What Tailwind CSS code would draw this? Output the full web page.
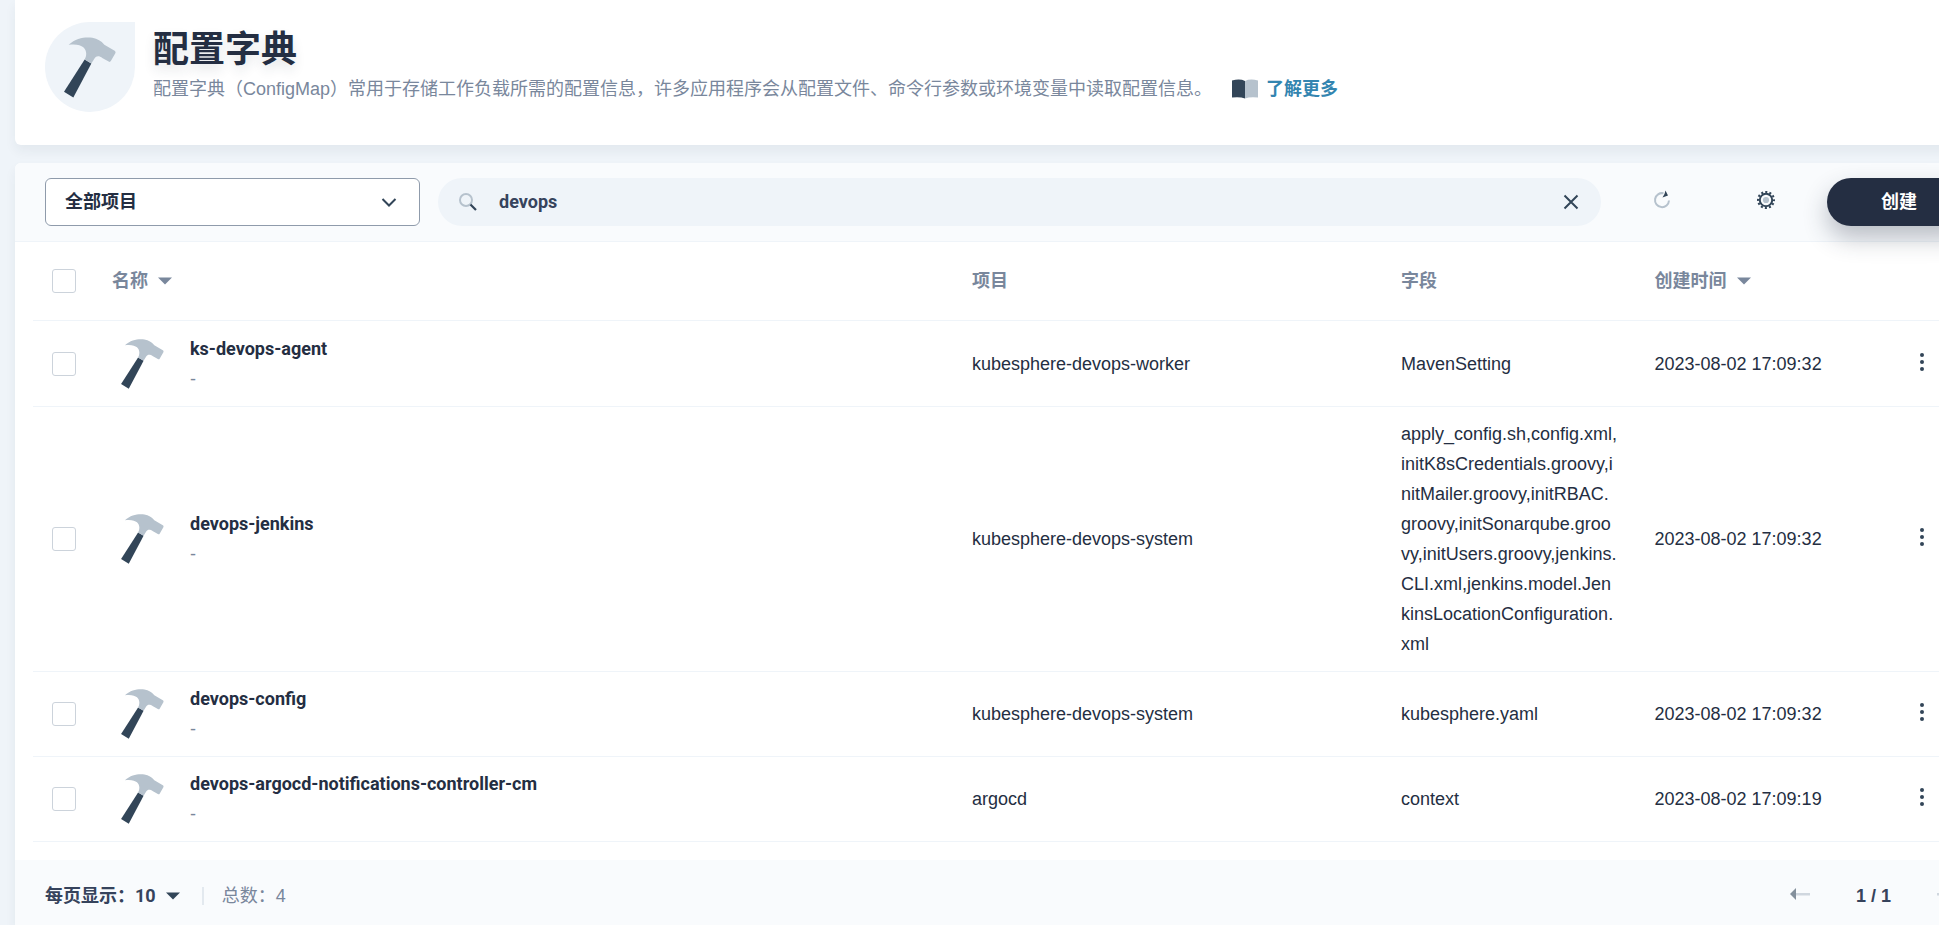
<!DOCTYPE html>
<html lang="zh-CN">
<head>
<meta charset="utf-8">
<title>配置字典</title>
<script src="https://cdn.jsdelivr.net/npm/@tailwindcss/browser@4"></script>
</head>
<body class="h-screen overflow-hidden bg-[#eff4f9] font-['Liberation_Sans','Noto_Sans_CJK_SC',sans-serif] text-lg leading-[30px] text-[#242e42]">
<svg class="hidden" aria-hidden="true">
  <symbol id="hammer" viewBox="195 110 156 182">
    <path fill="#324558" d="M257 177L277 189L223 291L195 274Z"/>
    <path fill="#b6c2cd" d="M209 133C232 111 262 109 280 112C296 115 306 121 316 133L347 151Q351 154 349 158L336 181Q333 186 329 183L311 173C299 164 291 167 287 173L277 189L257 177C268 157 262 126 209 133Z"/>
  </symbol>
  <symbol id="caret" viewBox="0 0 14 8"><path fill="currentColor" d="M0 0.5H14L7 7.5Z"/></symbol>
  <symbol id="dots" viewBox="0 0 24 24"><g fill="#324558"><circle cx="12" cy="5" r="2"/><circle cx="12" cy="12" r="2"/><circle cx="12" cy="19" r="2"/></g></symbol>
</svg>
<main class="-mr-[62px] ml-[15px] flex flex-col gap-[18px]">
  <header class="flex items-start gap-[18px] rounded-b-md bg-white px-[30px] pt-[22px] pb-[33px] shadow-[0_6px_12px_0_rgba(36,46,66,0.06)]">
    <div class="flex size-[90px] items-center justify-center rounded-full rounded-tr-none bg-[#eff4f9]">
      <svg class="h-[61px] w-[52px]"><use href="#hammer"/></svg>
    </div>
    <div class="pt-1">
      <h1 class="text-4xl leading-[48px] font-bold [text-shadow:0_6px_12px_rgba(36,46,66,0.12)]">配置字典</h1>
      <p class="flex items-center text-[#79879c]">配置字典（ConfigMap）常用于存储工作负载所需的配置信息，许多应用程序会从配置文件、命令行参数或环境变量中读取配置信息。
        <a href="#" class="ml-5 flex items-center gap-2 font-bold text-[#3385b0]">
          <svg class="h-5 w-[26px]" viewBox="0 0 26 20"><path fill="#324558" d="M0 1.5Q8 -.5 13 2V19.5Q8 17.500 0 18.500Z"/><path fill="#b6c2cd" d="M26 1.500Q18 -.500 13 2V19.500Q18 17.500 26 18.500Z"/></svg>
          了解更多
        </a>
      </p>
    </div>
  </header>

  <section class="overflow-hidden rounded-md bg-white shadow-[0_6px_12px_0_rgba(36,46,66,0.06)]">
    <div class="flex items-center gap-[18px] border-b border-[#eff4f9] bg-[#f9fbfd] px-[30px] py-[15px]">
      <div class="relative w-[375px]">
        <select aria-label="项目" class="h-12 w-full appearance-none rounded-md border border-[#8f9bab] bg-white pl-[19px] font-bold">
          <option>全部项目</option>
        </select>
        <svg class="pointer-events-none absolute top-4 right-[23px] size-4" viewBox="0 0 16 16"><path d="M1.500 5L8 11.500L14.500 5" fill="none" stroke="#324558" stroke-width="2"/></svg>
      </div>
      <div class="flex h-12 flex-1 items-center rounded-full bg-[#eff4f9] pr-[22px] pl-5">
        <svg class="size-5" viewBox="0 0 20 20" fill="none"><circle cx="8" cy="8" r="6" stroke="#b6c2cd" stroke-width="2"/><path d="M12.500 12.500L18 18" stroke="#324558" stroke-width="2.200"/></svg>
        <input type="text" aria-label="搜索" value="devops" class="ml-[21px] flex-1 bg-transparent font-['Roboto','Noto_Sans_CJK_SC',sans-serif] font-bold text-[#36435c] outline-none">
        <button aria-label="清除"><svg class="size-4" viewBox="0 0 16 16"><path d="M1.500 1.500L14.500 14.500M14.500 1.500L1.500 14.500" stroke="#324558" stroke-width="2"/></svg></button>
      </div>
      <button aria-label="刷新" class="flex h-12 w-[86px] items-center justify-center pb-1">
        <svg class="size-5" viewBox="0 0 20 20"><path d="M11.500 3.300A7 7 0 1 0 17 10.500" fill="none" stroke="#b6c2cd" stroke-width="2"/><path fill="#324558" d="M13.500 .5L16 5.500L10.500 7.500Q13 4 13.500 .5Z"/></svg>
      </button>
      <button aria-label="设置" class="flex h-12 w-[86px] items-center justify-center pb-1">
        <svg class="size-5" viewBox="0 0 20 20" fill="none"><circle cx="10" cy="10" r="6.200" stroke="#324558" stroke-width="2"/><circle cx="10" cy="10" r="8" stroke="#324558" stroke-width="2" stroke-dasharray="2.090 2.099" stroke-dashoffset="1"/><circle cx="10" cy="10" r="3.100" fill="#b6c2cd"/></svg>
      </button>
      <button class="h-12 w-36 rounded-full bg-[#242e42] font-bold text-white shadow-[0_12px_24px_0_rgba(36,46,66,0.3)]">创建</button>
    </div>

    <div class="px-[18px] pb-[18px]">
      <table class="w-full table-fixed border-separate border-spacing-0 text-left [&_td]:border-b [&_td]:border-[#eff4f9] [&_th]:border-b [&_th]:border-[#eff4f9]">
        <colgroup><col class="w-[67px]"><col><col class="w-[22%]"><col class="w-[13%]"><col class="w-[13%]"><col class="w-[87px]"></colgroup>
        <thead class="text-[#79879c]">
          <tr class="h-[79px]">
            <th class="pl-[19px]"><input type="checkbox" aria-label="全选" class="block size-6 appearance-none rounded-[3px] border border-[#ccd3db] bg-white"></th>
            <th class="px-3"><button class="flex items-center gap-2.5 font-bold">名称<svg class="h-2 w-3.5"><use href="#caret"/></svg></button></th>
            <th class="px-3">项目</th>
            <th class="px-3">字段</th>
            <th class="px-3"><button class="flex items-center gap-2.5 font-bold">创建时间<svg class="h-2 w-3.5"><use href="#caret"/></svg></button></th>
            <th></th>
          </tr>
        </thead>
        <tbody>
          <tr class="h-[86px]">
            <td class="pl-[19px]"><input type="checkbox" aria-label="ks-devops-agent" class="block size-6 appearance-none rounded-[3px] border border-[#ccd3db] bg-white"></td>
            <td class="px-3 py-3"><div class="flex items-center gap-[18px]"><span class="flex w-[60px] justify-center"><svg class="h-[50px] w-[43px]"><use href="#hammer"/></svg></span><div><a href="#" class="block font-['Roboto',sans-serif] font-bold">ks-devops-agent</a><p class="text-[#79879c]">-</p></div></div></td>
            <td class="px-3">kubesphere-devops-worker</td>
            <td class="px-3">MavenSetting</td>
            <td class="px-3">2023-08-02 17:09:32</td>
            <td class="pl-3.5"><button aria-label="更多操作" class="block pb-1"><svg class="size-6"><use href="#dots"/></svg></button></td>
          </tr>
          <tr>
            <td class="pl-[19px]"><input type="checkbox" aria-label="devops-jenkins" class="block size-6 appearance-none rounded-[3px] border border-[#ccd3db] bg-white"></td>
            <td class="px-3 py-3"><div class="flex items-center gap-[18px]"><span class="flex w-[60px] justify-center"><svg class="h-[50px] w-[43px]"><use href="#hammer"/></svg></span><div><a href="#" class="block font-['Roboto',sans-serif] font-bold">devops-jenkins</a><p class="text-[#79879c]">-</p></div></div></td>
            <td class="px-3">kubesphere-devops-system</td>
            <td class="px-3 py-3">apply_config.sh,config.xml,<br>initK8sCredentials.groovy,i<br>nitMailer.groovy,initRBAC.<br>groovy,initSonarqube.groo<br>vy,initUsers.groovy,jenkins.<br>CLI.xml,jenkins.model.Jen<br>kinsLocationConfiguration.<br>xml</td>
            <td class="px-3">2023-08-02 17:09:32</td>
            <td class="pl-3.5"><button aria-label="更多操作" class="block pb-1"><svg class="size-6"><use href="#dots"/></svg></button></td>
          </tr>
          <tr>
            <td class="pl-[19px]"><input type="checkbox" aria-label="devops-config" class="block size-6 appearance-none rounded-[3px] border border-[#ccd3db] bg-white"></td>
            <td class="px-3 py-3"><div class="flex items-center gap-[18px]"><span class="flex w-[60px] justify-center"><svg class="h-[50px] w-[43px]"><use href="#hammer"/></svg></span><div><a href="#" class="block font-['Roboto',sans-serif] font-bold">devops-config</a><p class="text-[#79879c]">-</p></div></div></td>
            <td class="px-3">kubesphere-devops-system</td>
            <td class="px-3">kubesphere.yaml</td>
            <td class="px-3">2023-08-02 17:09:32</td>
            <td class="pl-3.5"><button aria-label="更多操作" class="block pb-1"><svg class="size-6"><use href="#dots"/></svg></button></td>
          </tr>
          <tr>
            <td class="pl-[19px]"><input type="checkbox" aria-label="devops-argocd-notifications-controller-cm" class="block size-6 appearance-none rounded-[3px] border border-[#ccd3db] bg-white"></td>
            <td class="px-3 py-3"><div class="flex items-center gap-[18px]"><span class="flex w-[60px] justify-center"><svg class="h-[50px] w-[43px]"><use href="#hammer"/></svg></span><div><a href="#" class="block font-['Roboto',sans-serif] font-bold">devops-argocd-notifications-controller-cm</a><p class="text-[#79879c]">-</p></div></div></td>
            <td class="px-3">argocd</td>
            <td class="px-3">context</td>
            <td class="px-3">2023-08-02 17:09:19</td>
            <td class="pl-3.5"><button aria-label="更多操作" class="block pb-1"><svg class="size-6"><use href="#dots"/></svg></button></td>
          </tr>
        </tbody>
      </table>
    </div>

    <footer class="flex h-[72px] items-center bg-[#f9fbfd] px-[30px]">
      <button class="flex items-center gap-2.5 font-['Roboto','Noto_Sans_CJK_SC',sans-serif] font-bold text-[#36435c]">每页显示：10<svg class="h-2 w-3.5 text-[#324558]"><use href="#caret"/></svg></button>
      <span class="mr-[18px] ml-[22px] h-[18px] w-0.5 bg-[#e3e9ef]"></span>
      <span class="text-[#79879c]">总数：4</span>
      <nav aria-label="分页" class="ml-auto flex items-center">
        <button aria-label="上一页" disabled class="flex h-12 w-12 items-center justify-center pb-1"><svg class="h-3 w-5" viewBox="0 0 20 12"><path fill="#d0d7df" d="M5 5H20V7.500H5Z"/><path fill="#84909c" d="M0 6L6 0V12Z"/></svg></button>
        <span class="w-[99px] text-center font-bold text-[#36435c]">1 / 1</span>
        <button aria-label="下一页" disabled class="flex h-12 w-12 items-center justify-center pb-1"><svg class="h-3 w-5" viewBox="0 0 20 12"><path fill="#d0d7df" d="M0 5H15V7.500H0Z"/><path fill="#84909c" d="M20 6L14 0V12Z"/></svg></button>
      </nav>
    </footer>
  </section>
</main>
</body>
</html>
